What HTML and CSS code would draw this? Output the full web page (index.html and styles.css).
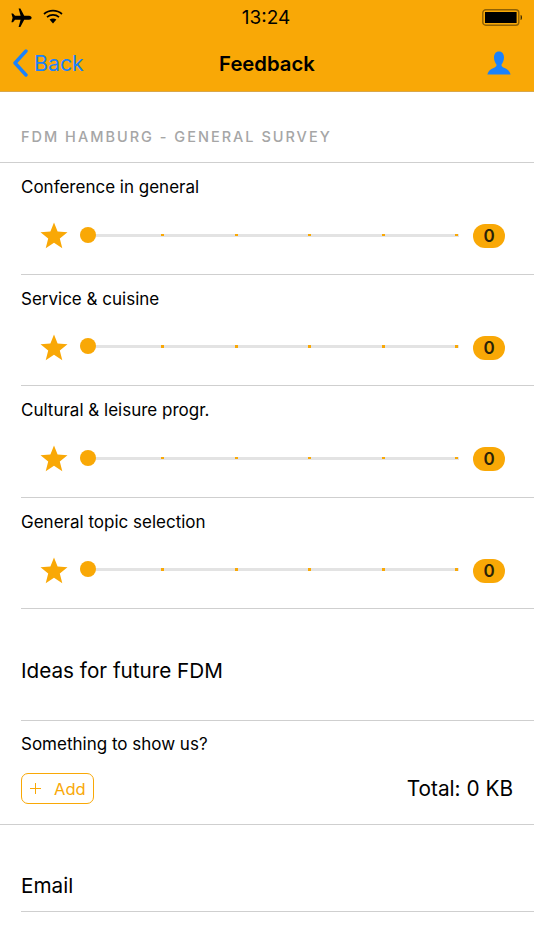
FILE: index.html
```html
<!DOCTYPE html>
<html lang="en">
<head>
  <meta charset="UTF-8" />
  <title>Feedback</title>
  <link rel="stylesheet" href="styles.css">
</head>
<body>

  <header class="topbar">
    <div class="status">
      <div class="status-left">
        <svg class="icon-plane" viewBox="0 0 22 20"><path fill="#000" d="M8.6 0.6 L10.4 0.6 L14.2 7.8 L19 7.8 C20.6 7.8 21.6 8.8 21.6 9.8 C21.6 10.8 20.6 11.8 19 11.8 L14.2 11.8 L10.4 19 L8.6 19 L10.6 11.8 L5 11.8 L3 14.2 L1.4 14.2 L2.6 9.8 L1.4 5.4 L3 5.4 L5 7.8 L10.6 7.8 Z"/></svg>
        <svg class="icon-wifi" viewBox="0 0 20 15"><g fill="none" stroke="#000" stroke-width="1.7"><path d="M1 5 C6 0.6 14 0.6 19 5"/><path d="M4 8.2 C7.5 5.2 12.5 5.2 16 8.2"/></g><path fill="#000" d="M6.6 10.6 C8.6 9 11.4 9 13.4 10.6 L10 14.4 Z"/></svg>
      </div>
      <div class="clock">13:24</div>
      <svg class="icon-battery" viewBox="0 0 40 17"><rect x="0.8" y="0.8" width="36" height="15.4" rx="3" fill="none" stroke="#8f6104" stroke-width="1.4"/><rect x="3" y="3" width="31.6" height="11" fill="#000"/><path fill="#3a2802" d="M38.6 6 C39.8 6.3 40 7.4 40 8.5 C40 9.6 39.8 10.7 38.6 11 Z"/></svg>
    </div>
    <nav class="navbar">
      <a class="back">
        <svg class="icon-back" viewBox="0 0 16 28"><path d="M14 2 L3 14 L14 26" fill="none" stroke="#1a82fb" stroke-width="3.4" stroke-linecap="round" stroke-linejoin="round"/></svg>
        Back
      </a>
      <div class="nav-title">Feedback</div>
      <svg class="icon-user" viewBox="0 0 24 24"><path fill="#1a82fb" d="M12 0.5 C15.4 0.5 17 3.2 17 6.4 C17 9.4 15.6 12 14.6 13.4 C14.2 14.6 14.8 15.8 16.4 16.6 C19 17.8 22.6 19 23.6 23.6 L0.4 23.6 C1.4 19 5 17.8 7.6 16.6 C9.2 15.8 9.8 14.6 9.4 13.4 C8.4 12 7 9.4 7 6.4 C7 3.2 8.6 0.5 12 0.5 Z"/></svg>
    </nav>
  </header>

  <h2 class="section-title">FDM HAMBURG - GENERAL SURVEY</h2>

  <section class="rating">
    <div class="label">Conference in general</div>
    <div class="rating-row">
      <svg class="star" viewBox="0 0 28 27"><path fill="#f9a806" d="M14 0.5 L17.6 9.6 L27.5 10.2 L19.8 16.6 L22.3 26.2 L14 20.8 L5.7 26.2 L8.2 16.6 L0.5 10.2 L10.4 9.6 Z"/></svg>
      <div class="slider"><span class="knob"></span><span class="tick"></span><span class="tick"></span><span class="tick"></span><span class="tick"></span><span class="tick"></span></div>
      <div class="score">0</div>
    </div>
  </section>

  <section class="rating">
    <div class="label">Service &amp; cuisine</div>
    <div class="rating-row">
      <svg class="star" viewBox="0 0 28 27"><path fill="#f9a806" d="M14 0.5 L17.6 9.6 L27.5 10.2 L19.8 16.6 L22.3 26.2 L14 20.8 L5.7 26.2 L8.2 16.6 L0.5 10.2 L10.4 9.6 Z"/></svg>
      <div class="slider"><span class="knob"></span><span class="tick"></span><span class="tick"></span><span class="tick"></span><span class="tick"></span><span class="tick"></span></div>
      <div class="score">0</div>
    </div>
  </section>

  <section class="rating">
    <div class="label">Cultural &amp; leisure progr.</div>
    <div class="rating-row">
      <svg class="star" viewBox="0 0 28 27"><path fill="#f9a806" d="M14 0.5 L17.6 9.6 L27.5 10.2 L19.8 16.6 L22.3 26.2 L14 20.8 L5.7 26.2 L8.2 16.6 L0.5 10.2 L10.4 9.6 Z"/></svg>
      <div class="slider"><span class="knob"></span><span class="tick"></span><span class="tick"></span><span class="tick"></span><span class="tick"></span><span class="tick"></span></div>
      <div class="score">0</div>
    </div>
  </section>

  <section class="rating">
    <div class="label">General topic selection</div>
    <div class="rating-row">
      <svg class="star" viewBox="0 0 28 27"><path fill="#f9a806" d="M14 0.5 L17.6 9.6 L27.5 10.2 L19.8 16.6 L22.3 26.2 L14 20.8 L5.7 26.2 L8.2 16.6 L0.5 10.2 L10.4 9.6 Z"/></svg>
      <div class="slider"><span class="knob"></span><span class="tick"></span><span class="tick"></span><span class="tick"></span><span class="tick"></span><span class="tick"></span></div>
      <div class="score">0</div>
    </div>
  </section>

  <div class="field ideas">Ideas for future FDM</div>

  <section class="attach">
    <div class="label">Something to show us?</div>
    <div class="attach-row">
      <button class="add-btn"><span class="plus"></span>Add</button>
      <div class="total">Total: 0 KB</div>
    </div>
  </section>

  <div class="field email">Email</div>

</body>
</html>
```

FILE: styles.css
```css
html, body {
  height: 100%;
}

body {
  margin: 0;
  background: #ffffff;
  color: #000000;
  font-family: Inter, "Liberation Sans", sans-serif;
  overflow: hidden;
}

.topbar {
  height: 92px;
  box-sizing: border-box;
  background: #f9a806;
  border-bottom: 1px solid #d9a74a;
}

.status {
  height: 35px;
  display: grid;
  grid-template-columns: 1fr auto 1fr;
  align-items: center;
  padding: 0 12px 0 10px;
}

.status-left {
  display: flex;
  align-items: center;
  gap: 11px;
}

.icon-plane {
  width: 22px;
  height: 20px;
}

.icon-wifi {
  width: 20px;
  height: 15px;
  margin-bottom: 3px;
}

.clock {
  font-size: 19px;
}

.icon-battery {
  width: 40px;
  height: 17px;
  justify-self: end;
}

.navbar {
  height: 56px;
  position: relative;
  display: flex;
  align-items: center;
  justify-content: space-between;
  padding: 0 23px 0 12px;
}

.back {
  display: flex;
  align-items: center;
  gap: 6px;
  color: #1a82fb;
  font-size: 21.3px;
}

.icon-back {
  width: 16px;
  height: 28px;
}

.nav-title {
  position: absolute;
  left: 0;
  right: 0;
  text-align: center;
  font-size: 20.3px;
  font-weight: 600;
}

.icon-user {
  width: 24px;
  height: 24px;
}

.section-title {
  margin: 0;
  height: 71px;
  box-sizing: border-box;
  padding: 36px 21px 0;
  font-size: 14.5px;
  line-height: 18px;
  font-weight: 500;
  letter-spacing: 2px;
  color: #a6a6a6;
  border-bottom: 1px solid #cfcfcf;
}

.rating {
  height: 111.5px;
  box-sizing: border-box;
  margin-left: 21px;
  padding-top: 13px;
  border-bottom: 1px solid #cfcfcf;
}

.label {
  font-size: 17px;
  line-height: 22px;
}

.rating-row {
  display: flex;
  align-items: center;
  margin-top: 19px;
  height: 36px;
}

.star {
  width: 28px;
  height: 27px;
  margin: 1px 0 0 19px;
}

.slider {
  position: relative;
  margin-left: 12px;
  width: 379px;
  height: 3px;
  background: #e3e3e3;
  display: flex;
  justify-content: space-between;
  align-items: center;
  padding: 0 1px 0 81px;
  box-sizing: border-box;
}

.knob {
  position: absolute;
  left: 0;
  top: -7px;
  width: 16px;
  height: 16px;
  border-radius: 50%;
  background: #f9a806;
}

.tick {
  width: 3px;
  height: 2.5px;
  background: #f9a806;
}

.score {
  width: 32px;
  height: 24px;
  margin: 2px 0 0 14px;
  border-radius: 12px;
  background: #f9a806;
  color: #2a2208;
  font-size: 17px;
  font-weight: 600;
  line-height: 24px;
  text-align: center;
}

.field {
  margin-left: 21px;
  box-sizing: border-box;
  font-size: 20.7px;
}

.ideas {
  height: 112px;
  padding-top: 48px;
  line-height: 28px;
  border-bottom: 1px solid #cfcfcf;
}

.attach {
  height: 104px;
  box-sizing: border-box;
  padding: 12px 21px 0;
  border-bottom: 1px solid #cfcfcf;
}

.attach-row {
  display: flex;
  align-items: center;
  justify-content: space-between;
  margin-top: 18px;
}

.add-btn {
  width: 73px;
  height: 31px;
  box-sizing: border-box;
  padding: 0 0 0 8px;
  display: flex;
  align-items: center;
  background: #ffffff;
  border: 1px solid #f9a806;
  border-radius: 7px;
  color: #f9a806;
  font-family: inherit;
  font-size: 16.5px;
}

.plus {
  width: 11px;
  height: 11px;
  margin-right: 13px;
  background:
    linear-gradient(#f9a806, #f9a806) center / 100% 1.4px no-repeat,
    linear-gradient(#f9a806, #f9a806) center / 1.4px 100% no-repeat;
}

.total {
  font-size: 20.8px;
}

.email {
  height: 87px;
  padding-top: 47px;
  line-height: 28px;
  border-bottom: 1px solid #cfcfcf;
}
```
